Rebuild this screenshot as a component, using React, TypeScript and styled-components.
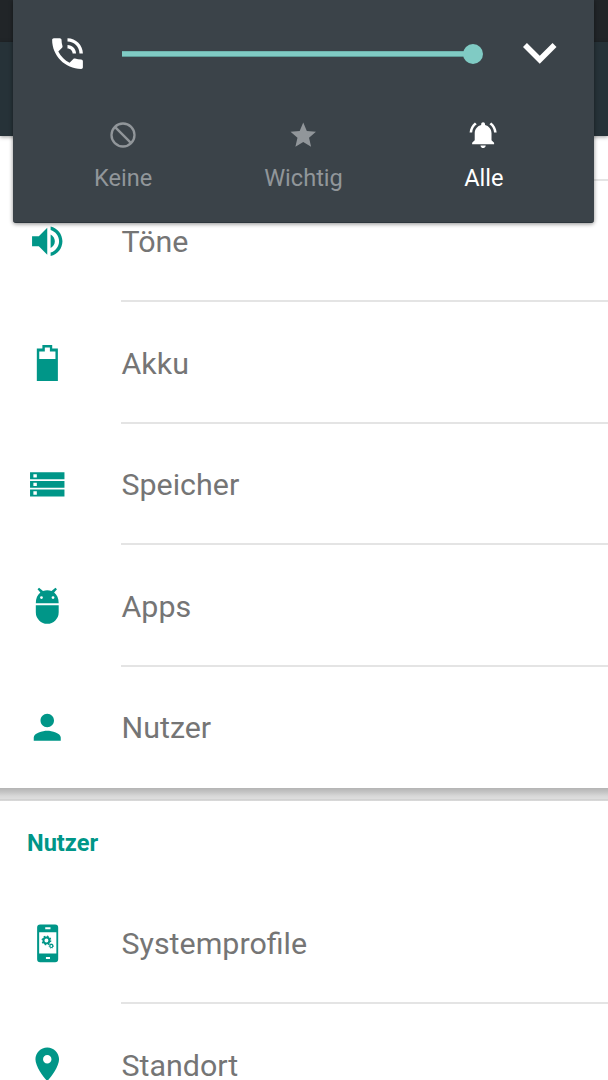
import React from "react";
import styled, { createGlobalStyle } from "styled-components";

const TEAL = "#009688";

const GlobalStyle = createGlobalStyle`
  * { box-sizing: border-box; }
  html, body { margin: 0; padding: 0; background: #fff; }
  body { overflow: hidden; font-family: Roboto, "Liberation Sans", sans-serif; }
  svg { display: block; flex: none; }
`;

const Screen = styled.div`
  position: relative;
  width: 608px;
  height: 1080px;
  overflow: hidden;
  display: flex;
  flex-direction: column;
  background: #e0e0e0;
`;

const StatusBar = styled.div`
  flex: none;
  height: 42px;
  background: #212528;
`;

const AppBar = styled.div`
  flex: none;
  height: 94px;
  background: #263238;
  box-shadow: 0 1px 4px rgba(0, 0, 0, 0.4);
  z-index: 1;
`;

const Category = styled.section<{ $height: number }>`
  flex: none;
  height: ${(p) => p.$height}px;
  overflow: hidden;
  background: #fff;
`;

const RowTail = styled.div`
  height: 44.6px;
  margin-left: 121px;
  border-bottom: 2px solid #e4e4e4;
`;

const Row = styled.div`
  display: flex;
  height: 121.5px;
  padding-left: 27px;
`;

const RowIcon = styled.div`
  flex: none;
  width: 94px;
  padding-bottom: 1px;
  display: flex;
  align-items: center;
  color: ${TEAL};
`;

const RowBody = styled.div<{ $divider: boolean }>`
  flex: 1;
  display: flex;
  align-items: center;
  padding: 3px 0 0 0.5px;
  color: #757575;
  font-size: 30.4px;
  border-bottom: 2px solid ${(p) => (p.$divider ? "#e4e4e4" : "transparent")};
`;

const Gap = styled.div`
  flex: none;
  height: 13px;
  background: linear-gradient(#b4b4b4 0, #c4c4c4 4px, #d8d8d8 8px, #dedede 11px, #cfcfcf 11px, #dadada 13px);
`;

const CategoryTitle = styled.h2`
  margin: 0;
  height: 81.5px;
  padding: 2px 0 0 27px;
  line-height: 81px;
  font-size: 23.6px;
  font-weight: 700;
  color: ${TEAL};
`;

const VolumePanel = styled.div`
  position: absolute;
  z-index: 2;
  top: 0;
  left: 13px;
  width: 581px;
  height: 222.5px;
  display: flex;
  flex-direction: column;
  background: #3b4349;
  border-radius: 0 0 3px 3px;
  border-bottom: 1px solid #2d363d;
  box-shadow: 0 1px 4px rgba(0, 0, 0, 0.45);
  color: #fff;
`;

const SliderRow = styled.div`
  display: flex;
  align-items: center;
  height: 107.5px;
  padding-left: 34px;
`;

const Slider = styled.div`
  display: flex;
  align-items: center;
  width: 361.5px;
  margin: 0 40px 0 33.5px;
`;

const Track = styled.div`
  flex: 1;
  height: 6px;
  background: #80cbc4;
  border-top: 1px solid #6fb5af;
  border-bottom: 1px solid #5e9c98;
`;

const Thumb = styled.div`
  width: 20.5px;
  height: 20.5px;
  margin-left: -2px;
  border-radius: 50%;
  background: #80cbc4;
`;

const Modes = styled.div`
  display: flex;
  padding: 12px 20px 0 20px;
`;

const Mode = styled.div<{ $active?: boolean }>`
  flex: 1;
  display: flex;
  flex-direction: column;
  align-items: center;
  color: ${(p) => (p.$active ? "#fff" : "#91969a")};
  font-size: 23.6px;
  line-height: 28px;
  gap: 13px;
`;

const ModeIcon = styled.div`
  height: 31px;
  display: flex;
  align-items: center;
`;

const Icon = ({ size = 40.5, box = "0 0 24 24", children }: { size?: number; box?: string; children: React.ReactNode }) => (
  <svg width={size} height={size} viewBox={box} fill="currentColor">
    {children}
  </svg>
);

const SoundIcon = () => (
  <Icon>
    <path d="M3 9v6h4l5 5V4L7 9H3zm13.5 3c0-1.77-1.02-3.29-2.5-4.03v8.05c1.48-.73 2.5-2.25 2.5-4.02zM14 3.23v2.06c2.89.86 5 3.54 5 6.71s-2.11 5.85-5 6.71v2.06c4.01-.91 7-4.49 7-8.77s-2.99-7.86-7-8.77z" />
  </Icon>
);

const BatteryIcon = () => (
  <Icon box="0 0 40 40">
    <path fillRule="evenodd" d="M9.700 6.500H15.200V2.900h9.700v3.600h5.600v32H9.700zM12.100 9.300v7.500h16V9.300h-5.500V5.500h-5v3.800z" />
  </Icon>
);

const StorageIcon = () => (
  <Icon box="0 0 40 40">
    <path
      fillRule="evenodd"
      d="M3 8.2h34v6.8H3zM6.3 10v3.3h3.4V10zM3 16.8h34v6.7H3zM6.3 18.5v3.3h3.4v-3.3zM3 25.3h34V32H3zM6.3 27v3.3h3.4V27z"
    />
  </Icon>
);

const AndroidIcon = () => (
  <Icon box="0 0 40 40">
    <path
      fillRule="evenodd"
      d="M8.700 18C8.700 13 10.400 9.500 13.200 7.300L10.400 4.200l1.500-1.500 3.900 3.300c2.700-1.100 5.700-1.100 8.400 0l3.900-3.300 1.500 1.500-2.800 3.100c2.800 2.200 4.500 5.700 4.500 10.700zM14.300 11a1.400 1.400 0 1 0 0 2.800a1.400 1.400 0 1 0 0-2.800zM25.700 11a1.400 1.400 0 1 0 0 2.800a1.400 1.400 0 1 0 0-2.800z"
    />
    <path d="M8.700 20h22.600v7a11.300 11.300 0 0 1-22.600 0z" />
  </Icon>
);

const PersonIcon = () => (
  <Icon>
    <path d="M12 12c2.21 0 4-1.79 4-4s-1.790-4-4-4-4 1.790-4 4 1.790 4 4 4zm0 2c-2.670 0-8 1.340-8 4v2h16v-2c0-2.660-5.330-4-8-4z" />
  </Icon>
);

const ProfilesIcon = () => (
  <Icon box="0 -.2 40 40">
    <path
      fillRule="evenodd"
      d="M13 1.300h14.800a3 3 0 0 1 3 3v31.200a3 3 0 0 1-3 3H13a3 3 0 0 1-3-3V4.300a3 3 0 0 1 3-3zM12 9v21h17V9zM18 3.900v2h5.200v-2zM18.700 33.300v2h4v-2z"
    />
    <g fill="none" stroke="currentColor">
      <circle cx="19.200" cy="17" r="2.900" strokeWidth="1.900" />
      <circle cx="19.200" cy="17" r="4.200" strokeWidth="1.300" strokeDasharray="1.650 1.650" />
      <circle cx="24" cy="22.500" r="1.500" strokeWidth="1.200" />
      <circle cx="24" cy="22.500" r="2.200" strokeWidth=".7" strokeDasharray=".86 .86" />
    </g>
  </Icon>
);

const PlaceIcon = () => (
  <Icon>
    <path d="M12 2C8.130 2 5 5.130 5 9c0 5.250 7 13 7 13s7-7.750 7-13c0-3.870-3.130-7-7-7zm0 9.500c-1.380 0-2.500-1.120-2.500-2.500s1.120-2.500 2.500-2.500 2.500 1.120 2.500 2.500-1.120 2.500-2.500 2.500z" />
  </Icon>
);

const PhoneIcon = () => (
  <Icon size={41}>
    <path d="M20 15.500c-1.250 0-2.450-.2-3.570-.57-.35-.11-.74-.03-1.020.24l-2.200 2.200c-2.830-1.440-5.150-3.750-6.590-6.590l2.200-2.210c.28-.26.36-.65.25-1C8.700 6.450 8.500 5.250 8.500 4c0-.55-.45-1-1-1H4c-.55 0-1 .45-1 1 0 9.390 7.610 17 17 17 .55 0 1-.45 1-1v-3.500c0-.55-.45-1-1-1zM19 12h2c0-4.970-4.030-9-9-9v2c3.870 0 7 3.130 7 7zm-4 0h2c0-2.760-2.240-5-5-5v2c1.660 0 3 1.340 3 3z" />
  </Icon>
);

const ExpandIcon = () => (
  <svg width="33.500" height="20.700" viewBox="6 8.590 12 7.410" fill="currentColor">
    <path d="M16.590 8.590L12 13.170 7.410 8.590 6 10l6 6 6-6z" />
  </svg>
);

const NoneIcon = () => (
  <Icon size={26} box="0 0 26 26">
    <g fill="none" stroke="currentColor" strokeWidth="2.300">
      <circle cx="13" cy="13" r="11.500" />
      <path d="M4.900 4.900l16.200 16.200" />
    </g>
  </Icon>
);

const StarIcon = () => (
  <Icon size={30.5}>
    <path d="M12 17.270L18.180 21l-1.640-7.030L22 9.240l-7.190-.61L12 2 9.190 8.630 2 9.240l5.460 4.730L5.820 21z" />
  </Icon>
);

const BellIcon = () => (
  <Icon size={31} box="-.2 .3 24 24">
    <path d="M6.580 3.580L5.150 2.150C2.760 3.970 1.180 6.800 1.030 10h2c.15-2.650 1.510-4.970 3.550-6.420zM19.970 10h2c-.15-3.200-1.730-6.030-4.130-7.850l-1.430 1.430c2.030 1.450 3.410 3.770 3.560 6.420zM18 10.500c0-3.070-2.130-5.640-5-6.320V3.500c0-.83-.67-1.500-1.500-1.500S10 2.670 10 3.500v.68c-2.870.68-5 3.250-5 6.320V16l-2 2v1h17v-1l-2-2v-5.500zM11.500 22c.14 0 .27-.01.4-.04.65-.13 1.190-.58 1.440-1.180.1-.24.16-.5.16-.78h-4c0 1.100.9 2 2 2z" />
  </Icon>
);

const deviceRows = [
  { label: "Töne", icon: <SoundIcon /> },
  { label: "Akku", icon: <BatteryIcon /> },
  { label: "Speicher", icon: <StorageIcon /> },
  { label: "Apps", icon: <AndroidIcon /> },
  { label: "Nutzer", icon: <PersonIcon /> },
];

const userRows = [
  { label: "Systemprofile", icon: <ProfilesIcon /> },
  { label: "Standort", icon: <PlaceIcon /> },
];

const Rows = ({ items }: { items: typeof deviceRows }) => (
  <>
    {items.map((item, i) => (
      <Row key={item.label}>
        <RowIcon>{item.icon}</RowIcon>
        <RowBody $divider={i < items.length - 1}>{item.label}</RowBody>
      </Row>
    ))}
  </>
);

export default function App() {
  return (
    <>
      <GlobalStyle />
      <Screen>
        <StatusBar />
        <AppBar />
        <Category $height={652}>
          <RowTail />
          <Rows items={deviceRows} />
        </Category>
        <Gap />
        <Category $height={400}>
          <CategoryTitle>Nutzer</CategoryTitle>
          <Rows items={userRows} />
        </Category>
        <VolumePanel>
          <SliderRow>
            <PhoneIcon />
            <Slider>
              <Track />
              <Thumb />
            </Slider>
            <ExpandIcon />
          </SliderRow>
          <Modes>
            <Mode>
              <ModeIcon><NoneIcon /></ModeIcon>
              Keine
            </Mode>
            <Mode>
              <ModeIcon><StarIcon /></ModeIcon>
              Wichtig
            </Mode>
            <Mode $active>
              <ModeIcon><BellIcon /></ModeIcon>
              Alle
            </Mode>
          </Modes>
        </VolumePanel>
      </Screen>
    </>
  );
}
